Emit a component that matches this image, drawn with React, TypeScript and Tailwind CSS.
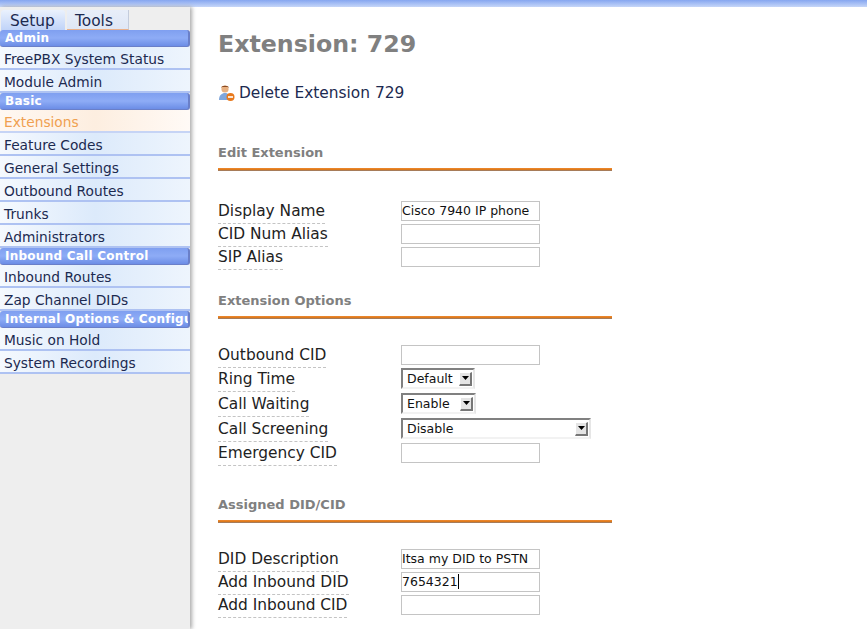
import React from "react";

function Header({ children }: { children: React.ReactNode }) {
  return (
    <div className="h-[17px] pl-[5px] overflow-hidden whitespace-nowrap rounded-[3px] bg-gradient-to-b from-[#7f9ff0] via-[#8eacf6] to-[#6c8de6] border-b border-r-2 border-b-[#6a7fc8] border-r-[#6a7fc8] text-white font-bold text-[12px] leading-[17px] tracking-[0.25px]">
      {children}
    </div>
  );
}

function Item({ children, active }: { children: React.ReactNode; active?: boolean }) {
  return (
    <div
      className={
        "h-[23px] pl-1 pt-[2px] border-b-2 text-[13.75px] leading-[20px] whitespace-nowrap bg-gradient-to-r " +
        (active
          ? "border-b-[#c6d4f5] from-[#fff8f2] via-[#fdeee0] to-[#fffaf6] text-[#f0a050]"
          : "border-b-[#aec2f2] from-[#f5f9fe] via-[#dceafb] to-[#eef5fd] text-[#1c2a50]")
      }
    >
      {children}
    </div>
  );
}

function SectionTitle({ children, className }: { children: React.ReactNode; className?: string }) {
  return (
    <div className={className}>
      <div className="text-[13px] leading-[16px] font-bold text-[#808080]">{children}</div>
      <div className="mt-[7px] w-[394px] h-[3px] bg-gradient-to-b from-[#f08a30] via-[#dd7a1c] to-[#8a7a6a]" />
    </div>
  );
}

function Label({ children, low }: { children: React.ReactNode; low?: boolean }) {
  return (
    <div className={"w-[183px] shrink-0 " + (low ? "-mt-[1px]" : "-mt-[2px]")}>
      <span className="inline-block text-[15.4px] leading-[18px] h-[22px] text-[#222] border-b border-dashed border-b-[#c4c4c4]">
        {children}
      </span>
    </div>
  );
}

function TextBox({ value, caret }: { value?: string; caret?: boolean }) {
  return (
    <div className="w-[139px] h-[20px] border border-[#c4c4c4] bg-white text-[12.5px] leading-[18px] text-[#111] whitespace-nowrap overflow-hidden">
      {value}
      {caret && <span className="inline-block w-px h-[15px] bg-black align-[-3px]" />}
    </div>
  );
}

function Select({ value, width }: { value: string; width: string }) {
  return (
    <div className={"h-[21px] flex items-center justify-between border-2 border-t-[#808080] border-l-[#808080] border-r-[#e6e6e6] border-b-[#f2f2f2] bg-white pl-1 pr-[1px] text-[12.5px] text-[#111] " + width}>
      <span className="pt-[2px]">{value}</span>
      <span className="w-[13px] h-[14px] flex items-center justify-center bg-[#e4e4e4] border-r-2 border-b-2 border-r-[#777] border-b-[#777] border-t border-l border-t-white border-l-white">
        <svg width="7" height="4" viewBox="0 0 7 4"><path d="M0 0h7L3.5 4z" fill="#000" /></svg>
      </span>
    </div>
  );
}

function Row({ label, children, h, low }: { label: string; children: React.ReactNode; h: string; low?: boolean }) {
  return (
    <div className={"flex items-start " + h}>
      <Label low={low}>{label}</Label>
      {children}
    </div>
  );
}

export default function App() {
  return (
    <div
      className="w-[867px] h-[629px] overflow-hidden bg-white flex flex-col"
      style={{ fontFamily: '"DejaVu Sans", sans-serif' }}
    >
      <div className="h-[7px] shrink-0 bg-gradient-to-b from-[#86a6f0] to-[#c6d6f8]" />
      <div className="flex flex-1 min-h-0">
        <aside className="w-[190px] shrink-0 bg-[#eeeeee] shadow-[2px_0_4px_#aaaaaa] relative">
          <div className="h-[23px] flex items-end pl-[1px] text-[15.4px] text-[#1c2a50]">
            <div className="h-[20px] w-[64px] pl-[9px] leading-[23px] rounded-t-[3px] bg-gradient-to-b from-[#eaf1fd] to-[#c0d3f8]">Setup</div>
            <div className="h-[20px] w-[62px] ml-[2px] pl-[8px] leading-[22px] bg-gradient-to-b from-[#e8eef9] to-[#dfe7f6] border-r border-b border-b-[#eab08a] border-r-[#c4ccdc]">Tools</div>
          </div>
          <Header>Admin</Header>
          <Item>FreePBX System Status</Item>
          <Item>Module Admin</Item>
          <Header>Basic</Header>
          <Item active>Extensions</Item>
          <Item>Feature Codes</Item>
          <Item>General Settings</Item>
          <Item>Outbound Routes</Item>
          <Item>Trunks</Item>
          <Item>Administrators</Item>
          <Header>Inbound Call Control</Header>
          <Item>Inbound Routes</Item>
          <Item>Zap Channel DIDs</Item>
          <Header>Internal Options &amp; Configuration</Header>
          <Item>Music on Hold</Item>
          <Item>System Recordings</Item>
        </aside>
        <main className="flex-1 pl-[28px] pt-[22px] overflow-hidden">
          <h2 className="text-[23.7px] leading-[30px] font-bold text-[#808080]">Extension: 729</h2>
          <div className="mt-[24px] flex items-center h-[22px] text-[15.4px] text-[#1c2a50]">
            <svg width="17" height="18" viewBox="0 0 17 18" className="mr-1 -mt-[2px]">
              <circle cx="7" cy="5" r="3.6" fill="#e8b080" />
              <path d="M3 4c0-3 8-3 8 0l-1-1H4z" fill="#8a4a20" />
              <path d="M1 16c0-5 3-7 6-7s6 2 6 7z" fill="#7fa6dc" />
              <circle cx="12.5" cy="13" r="4" fill="#e8791c" />
              <rect x="10" y="12.2" width="5" height="1.6" fill="#fff" />
            </svg>
            Delete Extension 729
          </div>
          <SectionTitle className="mt-[40px]">Edit Extension</SectionTitle>
          <div className="mt-[30px]">
            <Row label="Display Name" h="h-[23px]"><TextBox value="Cisco 7940 IP phone" /></Row>
            <Row label="CID Num Alias" h="h-[23px]"><TextBox /></Row>
            <Row label="SIP Alias" h="h-[23px]"><TextBox /></Row>
          </div>
          <SectionTitle className="mt-[23px]">Extension Options</SectionTitle>
          <div className="mt-[26px]">
            <Row label="Outbound CID" h="h-[23px]"><TextBox /></Row>
            <Row label="Ring Time" h="h-[25px]" low><Select value="Default" width="w-[74px]" /></Row>
            <Row label="Call Waiting" h="h-[25px]" low><Select value="Enable" width="w-[75px]" /></Row>
            <Row label="Call Screening" h="h-[25px]" low><Select value="Disable" width="w-[190px]" /></Row>
            <Row label="Emergency CID" h="h-[23px]"><TextBox /></Row>
          </div>
          <SectionTitle className="mt-[31px]">Assigned DID/CID</SectionTitle>
          <div className="mt-[26px]">
            <Row label="DID Description" h="h-[23px]"><TextBox value="Itsa my DID to PSTN" /></Row>
            <Row label="Add Inbound DID" h="h-[23px]"><TextBox value="7654321" caret /></Row>
            <Row label="Add Inbound CID" h="h-[23px]"><TextBox /></Row>
          </div>
        </main>
      </div>
    </div>
  );
}
